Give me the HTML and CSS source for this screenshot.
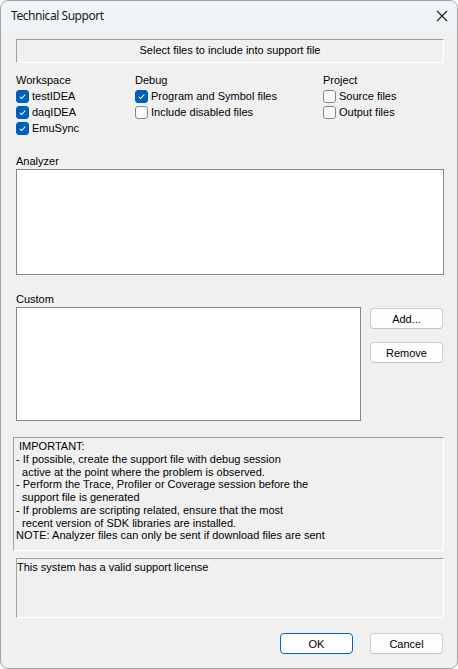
FILE: index.html
```html
<!DOCTYPE html>
<html>
<head>
<meta charset="utf-8">
<link rel="stylesheet" href="styles.css">
</head>
<body>
<div class="window">
  <div class="titlebar">
    <span class="title">Technical Support</span>
    <svg class="close" width="12" height="12" viewBox="0 0 12 12"><path d="M1 1 L11 11 M11 1 L1 11" stroke="#1b1b1b" stroke-width="1.1" fill="none"/></svg>
  </div>
  <div class="content">
    <div class="banner sunken">Select files to include into support file</div>
    <div class="groups">
      <div class="group g-ws">
        <div class="glabel">Workspace</div>
        <div class="cb"><span class="box on"><svg viewBox="0 0 13 13"><path d="M3.2 6.8 L5.4 9 L9.8 4.4" stroke="#fff" stroke-width="1.2" fill="none"/></svg></span>testIDEA</div>
        <div class="cb"><span class="box on"><svg viewBox="0 0 13 13"><path d="M3.2 6.8 L5.4 9 L9.8 4.4" stroke="#fff" stroke-width="1.2" fill="none"/></svg></span>daqIDEA</div>
        <div class="cb"><span class="box on"><svg viewBox="0 0 13 13"><path d="M3.2 6.8 L5.4 9 L9.8 4.4" stroke="#fff" stroke-width="1.2" fill="none"/></svg></span>EmuSync</div>
      </div>
      <div class="group g-dbg">
        <div class="glabel">Debug</div>
        <div class="cb"><span class="box on"><svg viewBox="0 0 13 13"><path d="M3.2 6.8 L5.4 9 L9.8 4.4" stroke="#fff" stroke-width="1.2" fill="none"/></svg></span>Program and Symbol files</div>
        <div class="cb"><span class="box"></span>Include disabled files</div>
      </div>
      <div class="group g-prj">
        <div class="glabel">Project</div>
        <div class="cb"><span class="box"></span>Source files</div>
        <div class="cb"><span class="box"></span>Output files</div>
      </div>
    </div>
    <div class="label lbl-analyzer">Analyzer</div>
    <div class="listbox analyzer"></div>
    <div class="label lbl-custom">Custom</div>
    <div class="custom-row">
      <div class="listbox custom"></div>
      <div class="side-buttons">
        <button class="btn">Add...</button>
        <button class="btn">Remove</button>
      </div>
    </div>
    <div class="note sunken"> IMPORTANT:
- If possible, create the support file with debug session
  active at the point where the problem is observed.
- Perform the Trace, Profiler or Coverage session before the
  support file is generated
- If problems are scripting related, ensure that the most
  recent version of SDK libraries are installed.
NOTE: Analyzer files can only be sent if download files are sent</div>
    <div class="license sunken">This system has a valid support license</div>
    <div class="footer">
      <button class="btn default">OK</button>
      <button class="btn">Cancel</button>
    </div>
  </div>
</div>
</body>
</html>
```

FILE: styles.css
```css
html, body {
  margin: 0;
  padding: 0;
  background: #ffffff;
}

.window {
  box-sizing: border-box;
  width: 458px;
  height: 669px;
  border: 1px solid #a3a3a3;
  border-radius: 8px;
  background: #f0f0f0;
  overflow: hidden;
  font-family: "Liberation Sans", Arial, sans-serif;
  font-size: 11px;
  color: #000;
}

.titlebar {
  height: 30px;
  background: #eff4f9;
  display: flex;
  align-items: center;
  justify-content: space-between;
  padding: 0 9px 0 10px;
}

.title {
  font-family: "Noto Sans", "Open Sans", sans-serif;
  font-size: 12px;
  letter-spacing: -0.45px;
  color: #1a1a1a;
  margin-top: -1px;
}

.close {
  display: block;
  margin-top: -1px;
}

.content {
  padding: 0 14px 0 15px;
}

.sunken {
  box-sizing: border-box;
  border-top: 1px solid #a0a0a0;
  border-left: 1px solid #a0a0a0;
  border-right: 1px solid #ffffff;
  border-bottom: 1px solid #ffffff;
}

.banner {
  margin-top: 8px;
  height: 24px;
  line-height: 21px;
  text-align: center;
  width: 428px;
}

.groups {
  margin-top: 9px;
  display: flex;
}

.group {
  display: flex;
  flex-direction: column;
}

.g-ws { width: 119px; }
.g-dbg { width: 188px; }

.glabel, .cb {
  height: 16px;
  line-height: 16px;
  white-space: nowrap;
}

.cb {
  display: flex;
  align-items: center;
}

.box {
  box-sizing: border-box;
  width: 13px;
  height: 13px;
  border: 1px solid #858585;
  border-radius: 3px;
  background: #fcfcfc;
  margin-right: 3px;
  flex: none;
  display: block;
}

.box.on {
  border-color: #005fb8;
  background: #005fb8;
}

.box svg {
  display: block;
  width: 11px;
  height: 11px;
}

.label {
  height: 16px;
  line-height: 16px;
}

.lbl-analyzer { margin-top: 17px; }
.lbl-custom { margin-top: 16px; }

.listbox {
  box-sizing: border-box;
  background: #ffffff;
  border: 1px solid #828790;
}

.analyzer {
  width: 428px;
  height: 106px;
}

.custom-row {
  display: flex;
}

.custom {
  width: 345px;
  height: 114px;
}

.side-buttons {
  margin-left: 9px;
  padding-top: 1px;
  display: flex;
  flex-direction: column;
  gap: 13px;
}

.btn {
  box-sizing: border-box;
  width: 73px;
  height: 21px;
  padding: 0;
  background: #fdfdfd;
  border: 1px solid #d0d0d0;
  border-bottom-color: #c2c2c2;
  border-radius: 4px;
  font-family: "Liberation Sans", Arial, sans-serif;
  font-size: 11px;
  color: #000;
}

.btn.default {
  border: 1px solid #0067c0;
}

.note {
  margin-top: 16px;
  margin-left: -3px;
  width: 431px;
  height: 114px;
  padding: 2px 0 0 2px;
  white-space: pre;
  line-height: 12.75px;
}

.license {
  margin-top: 7px;
  width: 428px;
  height: 60px;
  padding: 1px 0 0 0;
  line-height: 14px;
}

.footer {
  margin-top: 15px;
  display: flex;
  justify-content: flex-end;
  gap: 17px;
}
```
